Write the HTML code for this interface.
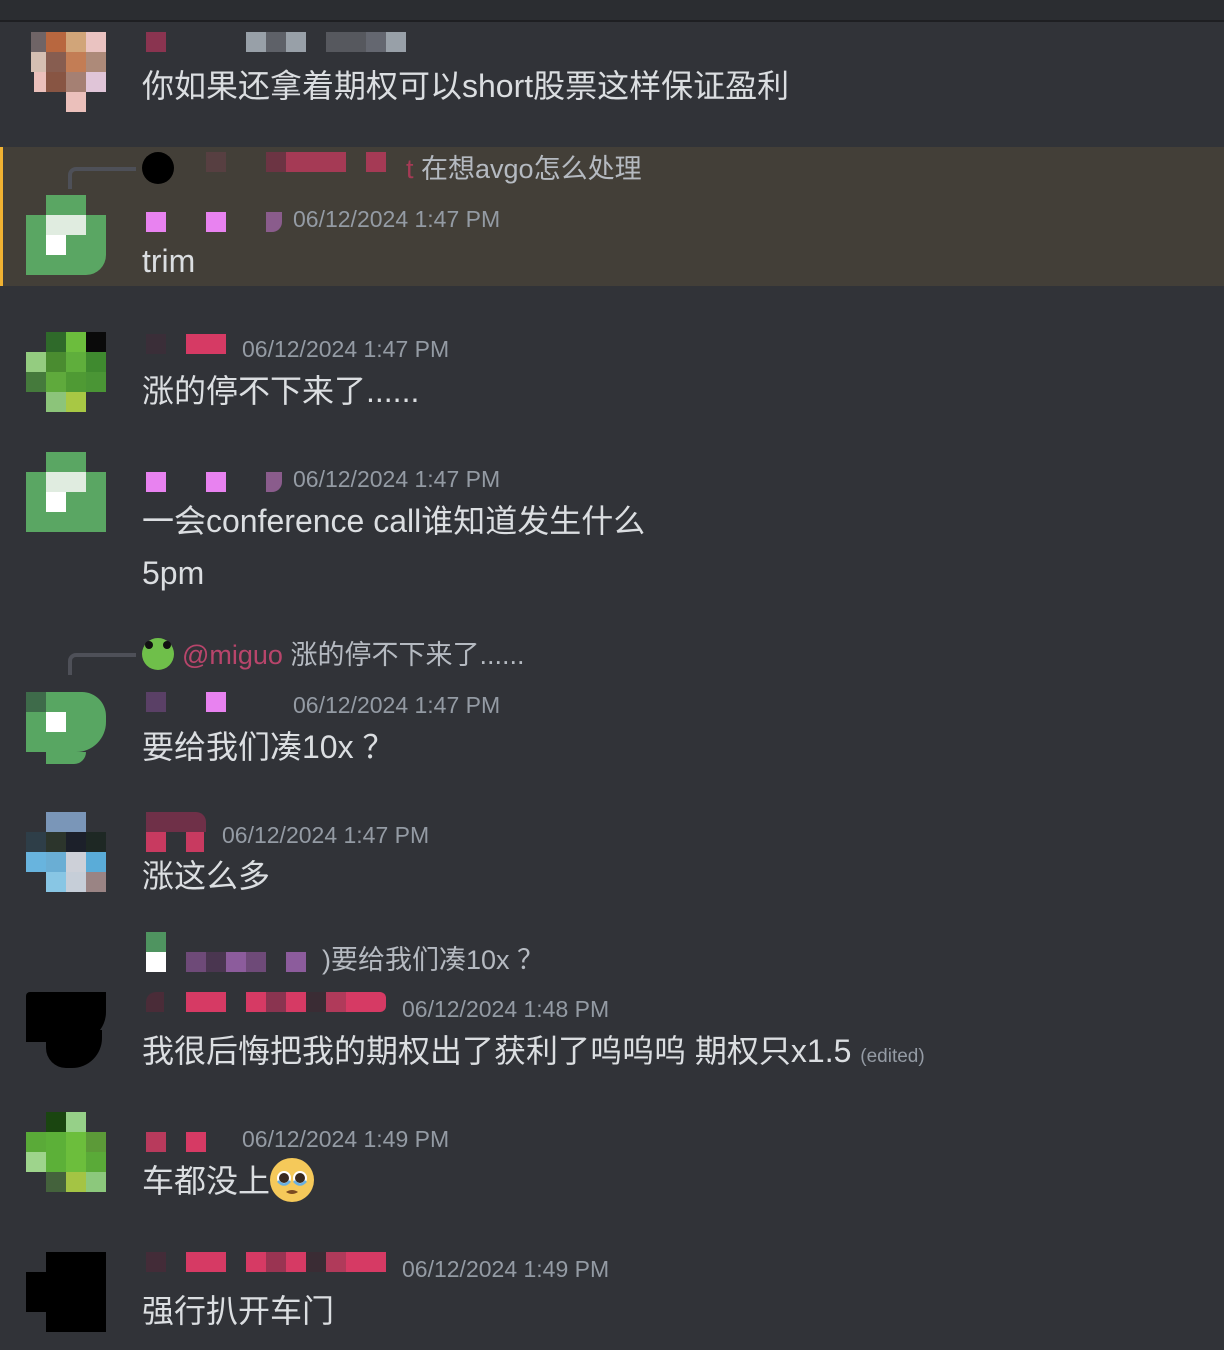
<!DOCTYPE html>
<html><head><meta charset="utf-8"><style>
body{margin:0;width:1224px;height:1350px;background:#313338;position:relative;overflow:hidden;font-family:"Liberation Sans","Noto Sans CJK SC",sans-serif}
.b{position:absolute;width:20px;height:20px}
.t{position:absolute;white-space:nowrap;color:#dbdee1;font-size:32px;line-height:40px;height:40px}
.ts{position:absolute;white-space:nowrap;color:#949ba4;font-size:23px;line-height:30px}
.r{position:absolute;white-space:nowrap;color:#b5bac1;font-size:27px;line-height:34px}
.ln{position:absolute;border-left:4px solid #4e5058;border-top:4px solid #4e5058;border-top-left-radius:8px;width:64px;height:18px}
</style></head><body>
<div style="position:absolute;left:0;top:0;width:1224px;height:20px;background:#2b2d31"></div>
<div style="position:absolute;left:0;top:20px;width:1224px;height:2px;background:#1e1f22"></div>

<!-- msg1 -->
<div class="b" style="left:31px;top:32px;width:15px;background:#6f6466"></div>
<div class="b" style="left:46px;top:32px;background:#b8673f"></div>
<div class="b" style="left:66px;top:32px;background:#d1a579"></div>
<div class="b" style="left:86px;top:32px;background:#eac3c1"></div>
<div class="b" style="left:31px;top:52px;width:15px;background:#d5bfb2"></div>
<div class="b" style="left:46px;top:52px;background:#875d50"></div>
<div class="b" style="left:66px;top:52px;background:#c37d55"></div>
<div class="b" style="left:86px;top:52px;background:#ad8a79"></div>
<div class="b" style="left:34px;top:72px;width:12px;background:#ebc0bb"></div>
<div class="b" style="left:46px;top:72px;background:#885543"></div>
<div class="b" style="left:66px;top:72px;background:#a58073"></div>
<div class="b" style="left:86px;top:72px;background:#e0c5d8"></div>
<div class="b" style="left:66px;top:92px;background:#ebc0bb"></div>
<div class="b" style="left:146px;top:32px;background:#8a3450"></div>
<div class="b" style="left:246px;top:32px;background:#98a0a8"></div>
<div class="b" style="left:266px;top:32px;background:#5e6168"></div>
<div class="b" style="left:286px;top:32px;background:#98a0a8"></div>
<div class="b" style="left:326px;top:32px;width:40px;background:#56585e"></div>
<div class="b" style="left:366px;top:32px;background:#646770"></div>
<div class="b" style="left:386px;top:32px;background:#98a0a8"></div>
<div class="t" style="left:142px;top:66px">你如果还拿着期权可以short股票这样保证盈利</div>

<!-- highlighted msg2 -->
<div style="position:absolute;left:0;top:147px;width:1224px;height:139px;background:#433f38"></div>
<div style="position:absolute;left:0;top:147px;width:3px;height:139px;background:#f0b232"></div>
<div class="ln" style="left:68px;top:167px"></div>
<div style="position:absolute;left:142px;top:152px;width:32px;height:32px;border-radius:50%;background:#000"></div>
<div class="b" style="left:206px;top:152px;background:#573f41"></div>
<div class="b" style="left:266px;top:152px;background:#6c3443"></div>
<div class="b" style="left:286px;top:152px;width:60px;background:#a53a55"></div>
<div class="b" style="left:366px;top:152px;background:#a53a55"></div>
<div class="r" style="left:406px;top:152px"><span style="color:#a53a55">t</span> 在想avgo怎么处理</div>
<div class="b" style="left:46px;top:195px;width:40px;background:#5aa663"></div>
<div class="b" style="left:26px;top:215px;width:80px;height:60px;background:#5aa663;border-bottom-right-radius:20px"></div>
<div class="b" style="left:46px;top:215px;width:40px;background:#e0ece0"></div>
<div class="b" style="left:46px;top:235px;background:#fff"></div>
<div class="b" style="left:146px;top:212px;background:#e882f0"></div>
<div class="b" style="left:206px;top:212px;background:#e882f0"></div>
<div class="b" style="left:266px;top:212px;width:16px;background:#8a5c8c;border-bottom-right-radius:10px"></div>
<div class="ts" style="left:293px;top:204px">06/12/2024 1:47 PM</div>
<div class="t" style="left:142px;top:241px">trim</div>

<!-- msg3 -->
<div class="b" style="left:66px;top:332px;background:#6cbd3d"></div>
<div class="b" style="left:86px;top:332px;background:#0a0a0a"></div>
<div class="b" style="left:46px;top:332px;background:#2f6a2a"></div>
<div class="b" style="left:26px;top:352px;background:#94cc80"></div>
<div class="b" style="left:46px;top:352px;background:#4a8c30"></div>
<div class="b" style="left:66px;top:352px;background:#5fae3c"></div>
<div class="b" style="left:86px;top:352px;background:#3f8a2f"></div>
<div class="b" style="left:26px;top:372px;background:#457a3c"></div>
<div class="b" style="left:46px;top:372px;background:#5faa3c"></div>
<div class="b" style="left:66px;top:372px;background:#4f9a34"></div>
<div class="b" style="left:86px;top:372px;background:#4a9535"></div>
<div class="b" style="left:46px;top:392px;background:#8cc47a"></div>
<div class="b" style="left:66px;top:392px;background:#a8c844"></div>
<div class="b" style="left:146px;top:334px;background:#3a2e38"></div>
<div class="b" style="left:186px;top:334px;width:40px;background:#d63a64"></div>
<div class="ts" style="left:242px;top:334px">06/12/2024 1:47 PM</div>
<div class="t" style="left:142px;top:371px">涨的停不下来了......</div>

<!-- msg4 -->
<div class="b" style="left:46px;top:452px;width:40px;background:#5aa663"></div>
<div class="b" style="left:26px;top:472px;width:80px;height:60px;background:#5aa663"></div>
<div class="b" style="left:46px;top:472px;width:40px;background:#e0ece0"></div>
<div class="b" style="left:46px;top:492px;background:#fff"></div>
<div class="b" style="left:146px;top:472px;background:#e882f0"></div>
<div class="b" style="left:206px;top:472px;background:#e882f0"></div>
<div class="b" style="left:266px;top:472px;width:16px;background:#8a5c8c;border-bottom-right-radius:10px"></div>
<div class="ts" style="left:293px;top:464px">06/12/2024 1:47 PM</div>
<div class="t" style="left:142px;top:501px">一会conference call谁知道发生什么</div>
<div class="t" style="left:142px;top:553px">5pm</div>

<!-- msg5 -->
<div class="ln" style="left:68px;top:653px"></div>
<div style="position:absolute;left:142px;top:638px;width:32px;height:32px;border-radius:50%;background:#6fbf4a"></div>
<div style="position:absolute;left:145px;top:641px;width:8px;height:8px;border-radius:50%;background:#111"></div>
<div style="position:absolute;left:163px;top:641px;width:8px;height:8px;border-radius:50%;background:#111"></div>
<div class="r" style="left:182px;top:638px"><span style="color:#b8456b">@miguo</span> 涨的停不下来了......</div>
<div class="b" style="left:26px;top:692px;width:80px;height:60px;background:#58a662;border-top-right-radius:24px;border-bottom-right-radius:30px"></div>
<div class="b" style="left:26px;top:692px;background:#3e6b4a"></div>
<div class="b" style="left:46px;top:712px;background:#fff"></div>
<div class="b" style="left:46px;top:752px;width:40px;height:12px;background:#58a662;border-bottom-right-radius:20px"></div>
<div class="b" style="left:146px;top:692px;background:#5a4066"></div>
<div class="b" style="left:206px;top:692px;background:#e882f0"></div>
<div class="ts" style="left:293px;top:690px">06/12/2024 1:47 PM</div>
<div class="t" style="left:142px;top:727px">要给我们凑10x ？</div>

<!-- msg6 -->
<div class="b" style="left:46px;top:812px;width:40px;background:#7a96b8"></div>
<div class="b" style="left:26px;top:832px;background:#2e3e48"></div>
<div class="b" style="left:46px;top:832px;background:#2c352c"></div>
<div class="b" style="left:66px;top:832px;background:#1c202a"></div>
<div class="b" style="left:86px;top:832px;background:#1e2824"></div>
<div class="b" style="left:26px;top:852px;background:#68b4de"></div>
<div class="b" style="left:46px;top:852px;background:#6aaed4"></div>
<div class="b" style="left:66px;top:852px;background:#cdd0d8"></div>
<div class="b" style="left:86px;top:852px;background:#5aacd8"></div>
<div class="b" style="left:46px;top:872px;background:#88c6e4"></div>
<div class="b" style="left:66px;top:872px;background:#c6ced8"></div>
<div class="b" style="left:86px;top:872px;background:#9a8484"></div>
<div class="b" style="left:146px;top:812px;width:60px;background:#6f3048;border-top-right-radius:10px"></div>
<div class="b" style="left:146px;top:832px;background:#c83a60"></div>
<div class="b" style="left:186px;top:832px;width:18px;background:#c83a60"></div>
<div class="ts" style="left:222px;top:820px">06/12/2024 1:47 PM</div>
<div class="t" style="left:142px;top:856px">涨这么多</div>

<!-- msg7 -->
<div class="b" style="left:146px;top:932px;background:#4f9460"></div>
<div class="b" style="left:146px;top:952px;background:#fff"></div>
<div class="b" style="left:186px;top:952px;background:#6e4a78"></div>
<div class="b" style="left:206px;top:952px;background:#4a3650"></div>
<div class="b" style="left:226px;top:952px;background:#8c5c9c"></div>
<div class="b" style="left:246px;top:952px;background:#6e4a78"></div>
<div class="b" style="left:286px;top:952px;background:#8c5c9c"></div>
<div class="r" style="left:322px;top:943px">)要给我们凑10x ？</div>
<div class="b" style="left:26px;top:992px;width:80px;height:50px;background:#000;border-top-left-radius:4px;border-bottom-right-radius:30px"></div>
<div class="b" style="left:46px;top:1030px;width:56px;height:38px;background:#000;border-radius:0 0 30px 20px"></div>
<div class="b" style="left:146px;top:992px;width:18px;background:#4a2c38;border-top-left-radius:10px"></div>
<div class="b" style="left:186px;top:992px;width:40px;background:#d63a64"></div>
<div class="b" style="left:246px;top:992px;width:20px;background:#d63a64"></div>
<div class="b" style="left:266px;top:992px;background:#8a3450"></div>
<div class="b" style="left:286px;top:992px;background:#d63a64"></div>
<div class="b" style="left:306px;top:992px;background:#3a2c34"></div>
<div class="b" style="left:326px;top:992px;background:#b03a5a"></div>
<div class="b" style="left:346px;top:992px;width:40px;background:#d63a64;border-radius:0 6px 6px 0"></div>
<div class="ts" style="left:402px;top:994px">06/12/2024 1:48 PM</div>
<div class="t" style="left:142px;top:1031px">我很后悔把我的期权出了获利了呜呜呜 期权只x1.5 <span style="font-size:19px;color:#949ba4">(edited)</span></div>

<!-- msg8 -->
<div class="b" style="left:46px;top:1112px;background:#1a4510"></div>
<div class="b" style="left:66px;top:1112px;background:#96d088"></div>
<div class="b" style="left:26px;top:1132px;background:#5aaa38"></div>
<div class="b" style="left:46px;top:1132px;background:#5cb038"></div>
<div class="b" style="left:66px;top:1132px;background:#6cbe3c"></div>
<div class="b" style="left:86px;top:1132px;background:#5c9a38"></div>
<div class="b" style="left:26px;top:1152px;background:#9ed48c"></div>
<div class="b" style="left:46px;top:1152px;background:#5cb038"></div>
<div class="b" style="left:66px;top:1152px;background:#6cbe3c"></div>
<div class="b" style="left:86px;top:1152px;background:#5aaa38"></div>
<div class="b" style="left:46px;top:1172px;background:#44623c"></div>
<div class="b" style="left:66px;top:1172px;background:#a4c444"></div>
<div class="b" style="left:86px;top:1172px;background:#8cc87c"></div>
<div class="b" style="left:146px;top:1132px;background:#b83a5c"></div>
<div class="b" style="left:186px;top:1132px;background:#d63a64"></div>
<div class="ts" style="left:242px;top:1124px">06/12/2024 1:49 PM</div>
<div class="t" style="left:142px;top:1161px">车都没上</div>
<svg style="position:absolute;left:270px;top:1158px" width="44" height="44" viewBox="0 0 44 44"><circle cx="22" cy="22" r="22" fill="#f5c95a"/><circle cx="14" cy="20" r="7" fill="#fff"/><circle cx="30" cy="20" r="7" fill="#fff"/><circle cx="14" cy="20" r="5" fill="#3a2a20"/><circle cx="30" cy="20" r="5" fill="#3a2a20"/><path d="M8 23 Q14 30 20 23" stroke="#6ab0e0" stroke-width="2.5" fill="none"/><path d="M24 23 Q30 30 36 23" stroke="#6ab0e0" stroke-width="2.5" fill="none"/><path d="M16 34 Q22 30 28 34 Q22 38 16 34Z" fill="#7a4a20"/></svg>

<!-- msg9 -->
<div class="b" style="left:46px;top:1252px;width:60px;height:80px;background:#000"></div>
<div class="b" style="left:26px;top:1272px;width:80px;height:40px;background:#000"></div>
<div class="b" style="left:146px;top:1252px;background:#432c38"></div>
<div class="b" style="left:186px;top:1252px;width:40px;background:#d63a64"></div>
<div class="b" style="left:246px;top:1252px;background:#d63a64"></div>
<div class="b" style="left:266px;top:1252px;background:#9a3452"></div>
<div class="b" style="left:286px;top:1252px;background:#d63a64"></div>
<div class="b" style="left:306px;top:1252px;background:#3a2c34"></div>
<div class="b" style="left:326px;top:1252px;background:#b03a5a"></div>
<div class="b" style="left:346px;top:1252px;width:40px;background:#d63a64"></div>
<div class="ts" style="left:402px;top:1254px">06/12/2024 1:49 PM</div>
<div class="t" style="left:142px;top:1291px">强行扒开车门</div>
</body></html>
